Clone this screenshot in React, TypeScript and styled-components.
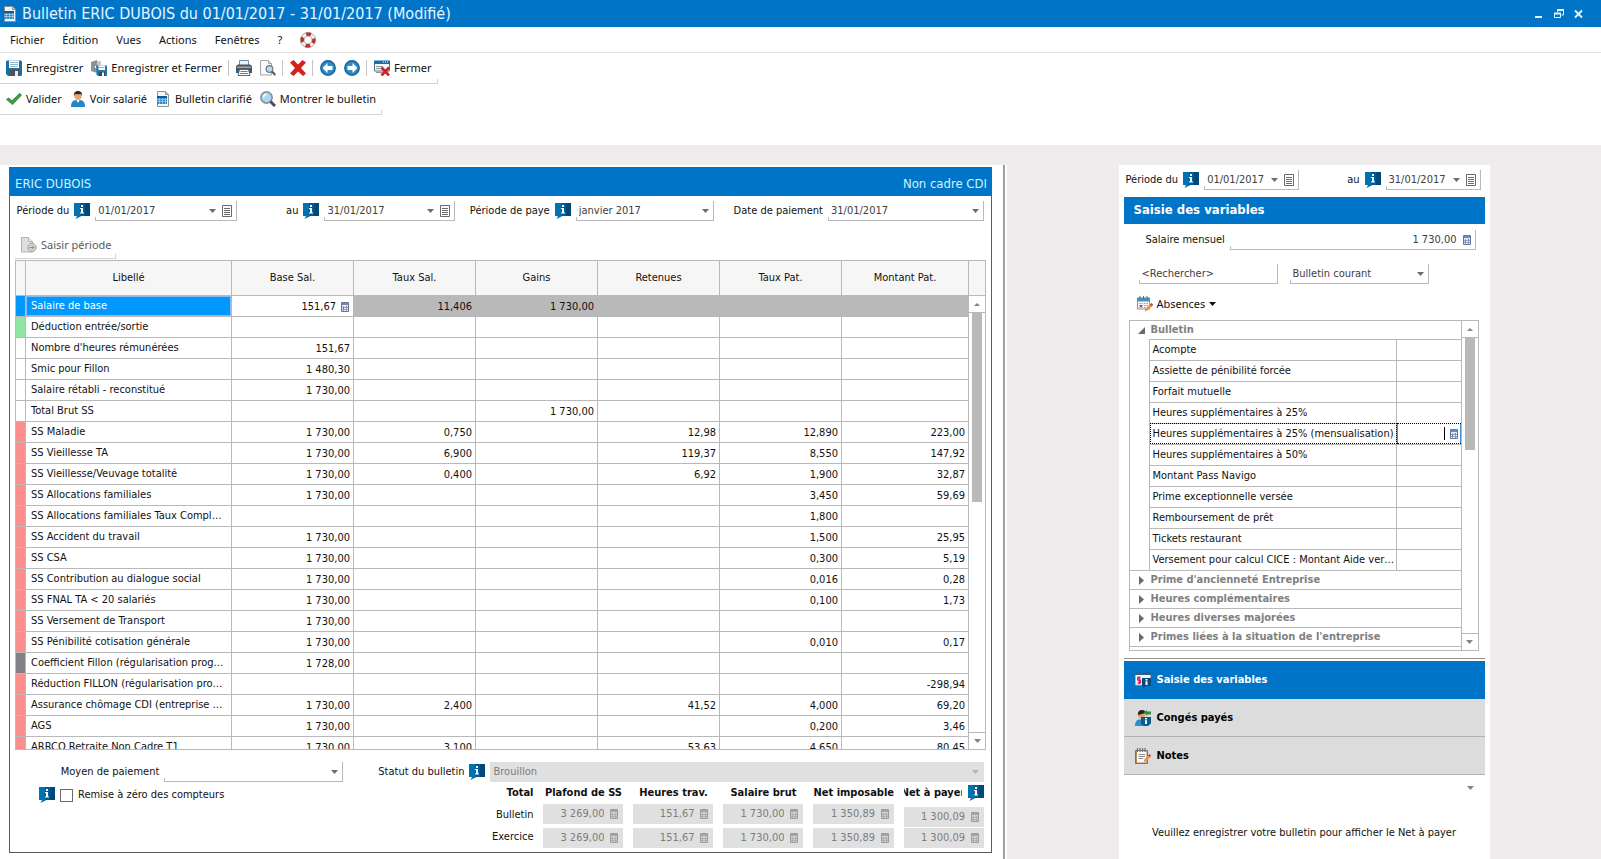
import React from 'react';
import styled, { createGlobalStyle, css } from 'styled-components';

const UI_FONT = '"DejaVu Sans Condensed", "Noto Sans", sans-serif';
const BAR_FONT = '"Noto Sans", "DejaVu Sans Condensed", sans-serif';
const BLUE = '#0075c8';
const LINE = '#b9b9b9';

const GlobalStyle = createGlobalStyle`
  *, *::before, *::after { box-sizing: border-box; }
  body { margin: 0; background: #eeeced; font-family: ${UI_FONT}; font-size: 11px; line-height: 16px; color: #111; }
  button, input, select { font: inherit; color: inherit; margin: 0; border-radius: 0; }
  button { background: none; border: 0; padding: 0; }
  svg { display: block; flex: none; }
`;

/* ---------- window frame ---------- */

const Window = styled.div`
  display: flex;
  flex-direction: column;
  height: 100vh;
  min-height: 720px;
  min-width: 1280px;
`;

const TitleBar = styled.header`
  display: flex;
  align-items: center;
  gap: 4px;
  height: 27px;
  padding: 0 16px 0 2px;
  background: ${BLUE};
  color: #e4f6ff;
`;

const Title = styled.h1`
  flex: 1;
  margin: 0;
  font-size: 16px;
  font-weight: 400;
  line-height: 24px;
`;

const WindowButtons = styled.div`
  display: flex;
  gap: 8px;
`;

const MenuBar = styled.nav`
  display: flex;
  align-items: center;
  gap: 18px;
  height: 26px;
  padding: 0 10px;
  background: #fff;
  border-bottom: 1px solid #e0e0e0;
  font-family: ${BAR_FONT};
`;

const Toolbars = styled.div`
  display: flex;
  flex-direction: column;
  align-items: flex-start;
  height: 92px;
  background: #fff;
`;

const Toolbar = styled.div`
  position: relative;
  display: flex;
  align-items: center;
  gap: 8px;
  height: 31px;
  padding: 0 6px;
  border-bottom: 1px solid #d4d4d4;
  &::after {
    content: '';
    position: absolute;
    right: 0;
    bottom: 0;
    width: 1px;
    height: 4px;
    background: #d4d4d4;
  }
`;

const ToolButton = styled.button<{ $dim?: boolean }>`
  display: flex;
  align-items: center;
  gap: 4px;
  color: ${(p) => (p.$dim ? '#5a5a5a' : '#111')};
  font-family: ${BAR_FONT};
  white-space: nowrap;
`;

const Separator = styled.span`
  width: 1px;
  height: 16px;
  margin: 0 -1px 0 -2px;
  background: #c4c4c4;
`;

const Workspace = styled.main`
  flex: 1;
  min-height: 0;
  display: grid;
  grid-template-columns: minmax(0, 1007fr) minmax(0, 594fr);
  grid-template-rows: minmax(0, 1fr);
  padding-top: 20px;
`;

const PayslipArea = styled.section`
  display: flex;
  padding: 2px 2px 6px 9px;
  background: #fff;
`;

const Splitter = styled.div`
  width: 2px;
  margin: -2px 0 -6px 11px;
  background: #a0a0a0;
`;

const SideArea = styled.aside`
  display: flex;
  justify-content: center;
`;

/* ---------- shared controls ---------- */

const Field = styled.span<{ $width?: number; $disabled?: boolean }>`
  position: relative;
  display: flex;
  align-items: center;
  gap: 6px;
  ${(p) => (p.$width ? css`flex: 0 0 ${p.$width}px;` : css`flex: 1;`)}
  min-width: 0;
  height: 20px;
  padding: 0 4px 0 3px;
  color: #404040;
  border-right: 1px solid ${LINE};
  border-bottom: 1px solid ${LINE};
  &::before {
    content: '';
    position: absolute;
    left: 0;
    bottom: 0;
    width: 1px;
    height: 3px;
    background: ${LINE};
  }
  ${(p) =>
    p.$disabled &&
    css`
      background: #e0e0e0;
      color: #7c7c7c;
      border-color: #e0e0e0;
      &::before { display: none; }
    `}
`;

const TextInput = styled.input<{ $right?: boolean }>`
  flex: 1;
  width: 0;
  min-width: 0;
  height: 18px;
  padding: 0;
  border: 0;
  outline: 0;
  background: transparent;
  text-align: ${(p) => (p.$right ? 'right' : 'left')};
  &::placeholder { color: #404040; opacity: 1; }
`;

const SelectInput = styled.select`
  flex: 1;
  width: 0;
  min-width: 0;
  height: 18px;
  padding: 0;
  border: 0;
  outline: 0;
  opacity: 1;
  appearance: none;
  background: transparent;
`;

const Labelled = styled.div`
  display: flex;
  align-items: center;
  justify-content: flex-end;
  gap: 5px;
  min-width: 0;
  white-space: nowrap;
`;

/* ---------- payslip ---------- */

const Payslip = styled.div`
  flex: 1;
  min-width: 0;
  display: flex;
  flex-direction: column;
  border: 1px solid #5c5c5c;
`;

const PayslipHeader = styled.div`
  display: flex;
  justify-content: space-between;
  align-items: center;
  height: 28px;
  padding: 3px 4px 0 5px;
  background: ${BLUE};
  color: #cdf3ff;
  font-size: 13px;
`;

const PeriodRow = styled.div`
  display: grid;
  grid-template-columns: 227fr 218fr 258fr 270fr;
  align-items: center;
  padding: 5px 7px 0 0;
`;

const SubToolbar = styled.div`
  display: flex;
  align-items: flex-start;
  padding: 15px 0 0 5px;
  margin-bottom: 1px;
`;

const SubToolbarInner = styled(Toolbar)`
  height: 23px;
  padding: 0 4px 5px 6px;
`;

const GridFrame = styled.div`
  flex: 1;
  min-height: 0;
  display: flex;
  margin: 0 5px;
  border: 1px solid ${LINE};
`;

const GridBody = styled.div`
  flex: 1;
  min-width: 0;
  overflow: hidden;
`;

const PayTable = styled.table`
  width: 100%;
  table-layout: fixed;
  border-collapse: separate;
  border-spacing: 0;
`;

const Column = styled.col<{ $width?: number }>`
  width: ${(p) => (p.$width ? `${p.$width}px` : 'auto')};
`;

const HeadCell = styled.th`
  height: 35px;
  padding: 0;
  background: #f6f6f6;
  border-right: 1px solid ${LINE};
  border-bottom: 1px solid ${LINE};
  font-weight: 400;
  text-align: center;
`;

const bodyCell = css`
  height: 21px;
  border-right: 1px solid ${LINE};
  border-bottom: 1px solid ${LINE};
  white-space: nowrap;
  overflow: hidden;
`;

const MarkCell = styled.td<{ $color: string }>`
  ${bodyCell}
  padding: 0;
  background: ${(p) => p.$color};
`;

const LabelCell = styled.th<{ $active?: boolean }>`
  ${bodyCell}
  padding: 0 6px 1px 5px;
  font-weight: 400;
  text-align: left;
  text-overflow: ellipsis;
  ${(p) =>
    p.$active &&
    css`
      background: #0099ff;
      color: #fff;
      box-shadow: inset 0 0 0 1px #8cb8e6;
    `}
`;

const NumCell = styled.td<{ $shade?: boolean }>`
  ${bodyCell}
  padding: 1px 3px 0 0;
  text-align: right;
  ${(p) =>
    p.$shade &&
    css`
      background: ${LINE};
    `}
`;

const EditValue = styled.span`
  display: flex;
  align-items: center;
  gap: 5px;
  padding-right: 1px;
`;

const ScrollColumn = styled.div`
  flex: 0 0 16px;
  display: flex;
  flex-direction: column;
`;

const ScrollHead = styled.div`
  height: 35px;
  background: #f6f6f6;
  border-bottom: 1px solid ${LINE};
`;

const ScrollTrack = styled.div`
  flex: 1;
  display: flex;
  flex-direction: column;
  background: #fff;
`;

const ScrollButton = styled.button<{ $end?: boolean }>`
  display: flex;
  align-items: center;
  justify-content: center;
  height: 17px;
  border: 0 solid ${LINE};
  border-width: ${(p) => (p.$end ? '1px 0 0 0' : '0 0 1px 0')};
`;

const ScrollRoom = styled.div`
  flex: 1;
  padding: 0 3px;
`;

const ScrollThumb = styled.div<{ $share: number }>`
  height: ${(p) => p.$share}%;
  background: ${LINE};
`;

const PayslipFooter = styled.div`
  padding: 12px 7px 4px 0;
`;

const FooterFields = styled.div`
  display: grid;
  grid-template-columns: 333fr 640fr;
`;

const StatusGroup = styled(Labelled)`
  padding-left: 35px;
`;

const FooterTotals = styled.div`
  display: flex;
  justify-content: space-between;
  align-items: flex-start;
  padding-top: 3px;
`;

const ResetOption = styled.div`
  display: flex;
  align-items: center;
  gap: 5px;
  padding: 2px 0 0 29px;
`;

const CheckBox = styled.input`
  appearance: none;
  width: 13px;
  height: 13px;
  border: 1px solid #6a6a6a;
  background: #fff;
`;

const TotalsTable = styled.table`
  border-collapse: collapse;
`;

const TotalHead = styled.th`
  width: 90px;
  height: 19px;
  padding: 0 0 3px 10px;
  font-weight: 700;
  text-align: center;
  white-space: nowrap;
`;

const TotalCorner = styled(TotalHead)`
  width: auto;
  text-align: right;
`;

const NetHead = styled.span`
  display: flex;
  align-items: center;
  gap: 6px;
`;

const NetText = styled.span`
  flex: 1;
  width: 0;
  display: flex;
  justify-content: center;
  overflow: hidden;
`;

const TotalRowHead = styled.th`
  padding: 0 0 3px;
  font-weight: 400;
  text-align: right;
`;

const TotalCell = styled.td<{ $low?: boolean }>`
  padding: ${(p) => (p.$low ? '3px 0 1px 10px' : '0 0 4px 10px')};
  tbody tr:last-child & { padding: 0 0 0 10px; }
`;

/* ---------- side panel ---------- */

const SidePanel = styled.div`
  flex: 0 1 371px;
  min-width: 0;
  padding: 5px 5px 0;
  background: #fff;
`;

const SidePeriods = styled.div`
  display: flex;
  justify-content: space-between;
  padding: 0 4px 0 2px;
`;

const SideTitle = styled.h2`
  margin: 7px 0 0;
  padding: 0 10px;
  height: 27px;
  background: ${BLUE};
  color: #fff;
  font-size: 13px;
  line-height: 26px;
`;

const SideRow = styled.div`
  display: flex;
  align-items: center;
  gap: 5px;
  padding: 6px 9px 0 22px;
`;

const SearchRow = styled.div`
  display: flex;
  gap: 12px;
  padding: 14px 56px 0 15px;
`;

const AbsenceRow = styled.div`
  display: flex;
  padding: 12px 0 8px 13px;
`;

const VariableFrame = styled.div`
  display: flex;
  margin: 0 6px 0 5px;
  border: 1px solid ${LINE};
`;

const VariableList = styled.div`
  flex: 1;
  min-width: 0;
  padding-bottom: 3px;
  border-right: 1px solid ${LINE};
`;

const GroupButton = styled.button<{ $open?: boolean }>`
  display: flex;
  align-items: center;
  gap: 6px;
  width: 100%;
  height: ${(p) => (p.$open ? 18 : 19)}px;
  padding: 0 0 0 8px;
  border-bottom: ${(p) => (p.$open ? 'none' : `1px solid ${LINE}`)};
  color: #808080;
  font-weight: 700;
`;

const VariableTableWrap = styled.div`
  padding-left: 19px;
  border-bottom: 1px solid ${LINE};
`;

const VariableTable = styled.table`
  width: 100%;
  table-layout: fixed;
  border-collapse: separate;
  border-spacing: 0;
  border-left: 1px solid ${LINE};
`;

const VariableName = styled.th<{ $focus?: boolean }>`
  height: 21px;
  padding: 0 0 0 3px;
  border-top: 1px solid ${LINE};
  border-right: 1px solid ${LINE};
  font-weight: 400;
  text-align: left;
  white-space: nowrap;
  overflow: hidden;
  text-overflow: ellipsis;
  ${(p) =>
    p.$focus &&
    css`
      outline: 1px dotted #000;
      outline-offset: -1px;
    `}
`;

const VariableValue = styled.td<{ $focus?: boolean }>`
  padding: 0 3px 0 0;
  border-top: 1px solid ${LINE};
  ${(p) =>
    p.$focus &&
    css`
      border-top: 1px dotted #000;
      border-bottom: 1px dotted #000;
      box-shadow: inset 1px 0 0 #3c8fdc, inset -1px 0 0 #3c8fdc;
    `}
`;

const ValueEditor = styled.span`
  display: flex;
  align-items: center;
  justify-content: flex-end;
  gap: 5px;
`;

const Caret = styled.span`
  width: 1px;
  height: 13px;
  background: #000;
`;

const Tabs = styled.nav`
  margin-top: 7px;
  padding-top: 2px;
  border-top: 1px solid #8f8f8f;
`;

const TabButton = styled.button<{ $active?: boolean }>`
  display: flex;
  align-items: center;
  gap: 6px;
  width: 100%;
  height: 38px;
  padding: 0 11px;
  background: ${(p) => (p.$active ? BLUE : '#dcdcdd')};
  color: ${(p) => (p.$active ? '#fff' : '#000')};
  border-bottom: 1px solid ${(p) => (p.$active ? BLUE : '#b2b2b2')};
  font-weight: 700;
`;

const MoreRow = styled.div`
  display: flex;
  justify-content: flex-end;
  padding: 11px 11px 0;
`;

const Notice = styled.p`
  margin: 35px 10px 0;
  text-align: center;
`;

/* ---------- icons ---------- */

const Arrow = ({ color = '#6c6c6c' }: { color?: string }) => (
  <svg width="7" height="4" viewBox="0 0 7 4" aria-hidden="true">
    <path d="M0 0h7L3.5 4z" fill={color} />
  </svg>
);

const ArrowUp = () => (
  <svg width="6" height="3" viewBox="0 0 6 3" aria-hidden="true">
    <path d="M0 3h6L3 0z" fill="#858585" />
  </svg>
);

const Icon = ({ children }: { children: React.ReactNode }) => (
  <svg width="16" height="16" viewBox="0 0 16 16" aria-hidden="true">
    {children}
  </svg>
);

const InfoIcon = () => (
  <Icon>
    <path d="M0 0h16v13H7.500L1.500 16 3 13H0z" fill="#0072b0" />
    <path d="M6 0h10v13H6z" fill="#005c94" />
    <path d="M11 0h5v13h-5z" fill="#00477a" />
    <path d="M7 2h2v2H7zM6 5h3v4.500h1v1H6v-1h1V6H6z" fill="#fff" />
  </Icon>
);

const ListIcon = () => (
  <svg width="10" height="12" viewBox="0 0 10 12" aria-hidden="true">
    <path d="M.5.5h9v11h-9z" fill="#fff" stroke="#6a6a6a" />
    <path d="M2 3.500h6M2 5.500h6M2 7.500h6M2 9.500h6" stroke="#6a6a6a" />
  </svg>
);

const CalcIcon = ({ muted = false }: { muted?: boolean }) => (
  <svg width="8" height="10" viewBox="0 0 8 10" aria-hidden="true">
    <path d="M.5.5h7v9h-7z" fill={muted ? '#d0d0d0' : '#e2ebf6'} stroke={muted ? '#9c9c9c' : '#64789c'} />
    <path d="M1 1h6v2H1z" fill={muted ? '#a4a4a4' : '#6a8cc0'} />
    <path d="M1 5.500h6M1 7.500h6M2.500 4v5M5.500 4v5" stroke={muted ? '#a8a8a8' : '#8194b8'} strokeWidth=".8" />
    {!muted && <path d="M5 4h1v1H5zM2 6h1v1H2z" fill="#d04a40" />}
  </svg>
);

const SheetIcon = () => (
  <Icon>
    <path d="M2.500.5h8l3 3v12h-11z" fill="#f4f6f8" stroke="#8a929a" />
    <path d="M10.500.5v3h3" fill="#c9ced4" stroke="#8a929a" />
    <path d="M2 5h10v8H2z" fill="#2f86c2" />
    <path d="M2 5h10v2H2z" fill="#145a92" />
    <path d="M2 8.500h10M2 10.500h10M4.500 7v6M7.500 7v6M10.500 7v6" stroke="#a9d4f0" strokeWidth=".7" />
  </Icon>
);

const SaveIcon = () => (
  <Icon>
    <path d="M0 1.500 1 .5h14l1 1V15l-1 1H2l-2-2z" fill="#1a6ea6" />
    <path d="M3 .5h10V8H3z" fill="#fff" />
    <path d="M4 2.500h8M4 4.500h8M4 6.500h8" stroke="#9ab4c4" />
    <path d="M4 10h9v6H4z" fill="#4b5258" />
    <path d="M9 11h3v5H9z" fill="#e6edf2" />
  </Icon>
);

const SaveCloseIcon = () => (
  <Icon>
    <path d="M0 2 6 0v13l-6-2z" fill="#8b9299" />
    <path d="M6 1h4v11H6z" fill="#c4c9cd" />
    <path d="M4 6h1v2H4z" fill="#fff" />
    <path d="M5.500 5.500h10.500V16H7l-1.500-1.500z" fill="#1a78b4" />
    <path d="M7.500 5.500h6.500v4.500H7.500z" fill="#fff" />
    <path d="M8 7.500h5.500" stroke="#9ab4c4" />
    <path d="M8 12h6v4H8z" fill="#3e464c" />
    <path d="M11 12.500h2V16h-2z" fill="#fff" />
  </Icon>
);

const PrinterIcon = () => (
  <Icon>
    <path d="M3.500.5h9v5h-9z" fill="#e9f3fa" stroke="#6d8ea6" />
    <path d="M0 6 2 4.500h12L16 6v7H0z" fill="#4e5357" />
    <path d="M1 6.500h14V8H1z" fill="#a3a9ae" />
    <path d="M3.500 9.500h9l1.500 6H2z" fill="#fff" stroke="#1f7db8" />
    <path d="M4.500 11.500h7M4 13.500h8" stroke="#2f8cc6" />
  </Icon>
);

const PreviewIcon = () => (
  <Icon>
    <path d="M.5.5h8l3 3v11.500H.5z" fill="#fafafa" stroke="#a3a8ac" />
    <path d="M8.500.5v3h3" fill="#dfe2e4" stroke="#a3a8ac" />
    <circle cx="9.500" cy="9" r="3.300" fill="#b7dcf2" stroke="#6d7880" strokeWidth="1.200" />
    <path d="m12 11.500 3.300 3.500" stroke="#4d565d" strokeWidth="2" />
  </Icon>
);

const DeleteIcon = () => (
  <Icon>
    <path d="M0 2.500 3.500 0 8 4.500 12.500 0 16 2.500 11 8l5 5.500-3 2.500L8 11.500 3.500 16 0 13.500 5 8z" fill="#d4211d" />
  </Icon>
);

const RoundArrow = ({ right = false }: { right?: boolean }) => (
  <Icon>
    <circle cx="8" cy="8" r="7.200" fill="#2b8cc6" stroke="#175f94" strokeWidth="1.400" />
    <path
      d={right ? 'M13.500 8 8.500 3v3H3.500v4h5v3z' : 'M2.500 8l5-5v3h5v4h-5v3z'}
      fill="#fff"
    />
  </Icon>
);

const CloseWindowIcon = () => (
  <Icon>
    <path d="M.5 1.500h15v9.500H.5z" fill="#f3f5f7" stroke="#5e7486" />
    <path d="M0 .5h16V4H0z" fill="#1a6ea6" />
    <path d="M9 2h1M11 2h1M13 2h1" stroke="#fff" />
    <path d="M2 6.500h7M2 8.500h5M2 12.500h6" stroke="#8d969d" />
    <path d="m7.500 7.500 7.500 8M15 7.500l-7.500 8" stroke="#cc1f24" strokeWidth="2.600" />
  </Icon>
);

const CheckIcon = () => (
  <Icon>
    <path d="M0 8.500 2.500 6.500l3.500 3L13.500 2 16 4 6.500 14z" fill="#2f8a3c" />
    <path d="m1.500 8.500 4.700 3.800L14 3.500" fill="none" stroke="#58b060" />
  </Icon>
);

const PersonIcon = () => (
  <Icon>
    <path d="M1 16c0-5 2-6.500 5-7h4c3 .5 5 2 5 7z" fill="#2486c6" />
    <path d="M6.300 9 8 12l1.700-3z" fill="#fff" />
    <circle cx="8" cy="5.300" r="3.600" fill="#e8a774" />
    <path d="M4 5c-.6-3.500 1.500-5 4-5s4.600 1.500 4 5l-1-2C9 3.400 7 3.400 5 3z" fill="#33291f" />
  </Icon>
);

const GlassIcon = () => (
  <Icon>
    <circle cx="6.500" cy="6.500" r="5.600" fill="#aed8f2" stroke="#8a959c" strokeWidth="1.800" />
    <path d="M3.500 6.500a3 3 0 0 1 3-3" fill="none" stroke="#fff" strokeWidth="1.300" />
    <path d="m10.500 10.500 4.500 4.500" stroke="#464c52" strokeWidth="3" />
  </Icon>
);

const LifebuoyIcon = () => (
  <Icon>
    <circle cx="8" cy="8" r="5.800" fill="none" stroke="#f4f4f4" strokeWidth="3.600" />
    <circle cx="8" cy="8" r="5.800" fill="none" stroke="#b8322b" strokeWidth="3.600" strokeDasharray="4.555 4.555" strokeDashoffset="-2.278" transform="rotate(45 8 8)" />
    <circle cx="8" cy="8" r="7.600" fill="none" stroke="#9a8480" strokeWidth=".7" />
    <circle cx="8" cy="8" r="4" fill="#fff" stroke="#a89490" strokeWidth=".7" />
  </Icon>
);

const PagePendingIcon = () => (
  <Icon>
    <path d="M.5.5h7l4 4v10.500H.5z" fill="#dedede" stroke="#b4b4b4" />
    <path d="M7.500.5v4h4" fill="#f2f2f2" stroke="#b4b4b4" />
    <circle cx="11" cy="10.500" r="4.200" fill="#d4d4d4" stroke="#a4a4a4" />
    <path d="M8.500 10.500h4.500M11 8.500l2 2-2 2" fill="none" stroke="#8e8e8e" />
  </Icon>
);

const CalendarIcon = () => (
  <Icon>
    <path d="M.5 3.500h12v9.500H.5z" fill="#f6f9fb" stroke="#8b98a2" />
    <path d="M0 1.500h13v4H0z" fill="#4c8fb8" />
    <path d="M3 0v3M6.500 0v3M10 0v3" stroke="#5a6a75" />
    <path d="M2 7.500h9M2 9.500h9M2 11.500h7" stroke="#90a4b2" strokeDasharray="1.500 1" />
    <path d="M3 9h2v2H3z" fill="#d0392f" />
    <path d="m7.500 15.500 1-3 5.500-5 2 2-5.500 5z" fill="#e7954a" />
    <path d="m13 8.500 1.500-1.500L16 8.500 14.800 10z" fill="#c43f3a" />
  </Icon>
);

const VariablesIcon = () => (
  <Icon>
    <path d="M.5 1.500h15v11.500H.5z" fill="#f5f6f8" stroke="#a6b6c2" />
    <path d="M0 .5h16V3H0z" fill="#24618e" />
    <path d="M5.500 5.500H2.800v2.700h2.700v2.700H2.500M4.200 4.500v7.500" fill="none" stroke="#d81b72" strokeWidth="1.300" />
    <path d="M7 6h9v8h-5l-3 2v-2H7z" fill="#0d4a7c" />
    <path d="M10.500 7h2v1.500h-2zM10.500 9.300h2V13h-2z" fill="#fff" />
  </Icon>
);

const LeaveIcon = () => (
  <Icon>
    <path d="M0 16c0-4.500 2-6 4-6.500h5V16z" fill="#2f8cc8" />
    <circle cx="6.500" cy="5" r="3.500" fill="#e0a070" />
    <path d="M3 5c-.5-3.500 1.500-5 4-5s3.500 1.500 3.500 3z" fill="#2e241c" />
    <path d="m9 2.500 3-2.500v1.500h4v3h-4V6z" fill="#2f9140" />
    <path d="M6 7h10v6.500l-3 2.500H9l-3-2z" fill="#0c5c94" />
    <path d="M10 8h2v1.500h-2zM10 10.300h2V14h-2z" fill="#fff" />
  </Icon>
);

const NotesIcon = () => (
  <Icon>
    <path d="M.5 2.500h12v13H.5z" fill="#b8845a" stroke="#7b7068" />
    <path d="M2 3h9.500v11.500H2z" fill="#fbfbf8" />
    <path d="M2.500 0v4M5 0v4M7.500 0v4M10 0v4" stroke="#70767a" strokeWidth="1.300" />
    <path d="M3.500 6.500h6.500M3.500 8.500h6.500M3.500 10.500h4.500" stroke="#8b9094" />
    <path d="m8.500 14.500.8-3L14 6.500 16 8l-4.500 5.300z" fill="#e8954a" />
    <path d="m13.300 7.200 1-1.200L16 7.500 15 9z" fill="#c43f3a" />
  </Icon>
);

/* ---------- composed controls ---------- */

const DateField = ({ id, value, width, list = true }: { id: string; value: string; width: number; list?: boolean }) => (
  <Field $width={width}>
    <TextInput id={id} defaultValue={value} />
    <button aria-label="Ouvrir le calendrier"><Arrow /></button>
    {list && <button aria-label="Choisir une date"><ListIcon /></button>}
  </Field>
);

const AmountField = ({ name, value }: { name: string; value: string }) => (
  <Field $disabled>
    <TextInput aria-label={name} defaultValue={value} $right disabled />
    <CalcIcon muted />
  </Field>
);

/* ---------- data ---------- */

const BLUE_MARK = '#0099ff';
const GREEN = '#8fe6a0';
const RED = '#fa8f8d';
const GREY = '#808085';
const NONE = '#ffffff';

type Row = [mark: string, label: string, ...values: string[]];

const COLUMN_WIDTHS = [10, 206, 122, 122, 122, 122, 122, undefined];

const ROWS: Row[] = [
  [GREEN, 'Déduction entrée/sortie', '', '', '', '', '', ''],
  [NONE, "Nombre d'heures rémunérées", '151,67', '', '', '', '', ''],
  [NONE, 'Smic pour Fillon', '1 480,30', '', '', '', '', ''],
  [NONE, 'Salaire rétabli - reconstitué', '1 730,00', '', '', '', '', ''],
  [NONE, 'Total Brut SS', '', '', '1 730,00', '', '', ''],
  [RED, 'SS Maladie', '1 730,00', '0,750', '', '12,98', '12,890', '223,00'],
  [RED, 'SS Vieillesse TA', '1 730,00', '6,900', '', '119,37', '8,550', '147,92'],
  [RED, 'SS Vieillesse/Veuvage totalité', '1 730,00', '0,400', '', '6,92', '1,900', '32,87'],
  [RED, 'SS Allocations familiales', '1 730,00', '', '', '', '3,450', '59,69'],
  [RED, 'SS Allocations familiales Taux Complémentaire', '', '', '', '', '1,800', ''],
  [RED, 'SS Accident du travail', '1 730,00', '', '', '', '1,500', '25,95'],
  [RED, 'SS CSA', '1 730,00', '', '', '', '0,300', '5,19'],
  [RED, 'SS Contribution au dialogue social', '1 730,00', '', '', '', '0,016', '0,28'],
  [RED, 'SS FNAL TA < 20 salariés', '1 730,00', '', '', '', '0,100', '1,73'],
  [RED, 'SS Versement de Transport', '1 730,00', '', '', '', '', ''],
  [RED, 'SS Pénibilité cotisation générale', '1 730,00', '', '', '', '0,010', '0,17'],
  [GREY, 'Coefficient Fillon (régularisation progressive)', '1 728,00', '', '', '', '', ''],
  [RED, 'Réduction FILLON (régularisation progressive)', '', '', '', '', '', '-298,94'],
  [RED, 'Assurance chômage CDI (entreprise de droit commun)', '1 730,00', '2,400', '', '41,52', '4,000', '69,20'],
  [RED, 'AGS', '1 730,00', '', '', '', '0,200', '3,46'],
  [RED, 'ARRCO Retraite Non Cadre T1', '1 730,00', '3,100', '', '53,63', '4,650', '80,45'],
];

const VARIABLES = [
  'Acompte',
  'Assiette de pénibilité forcée',
  'Forfait mutuelle',
  'Heures supplémentaires à 25%',
  'Heures supplémentaires à 25% (mensualisation)',
  'Heures supplémentaires à 50%',
  'Montant Pass Navigo',
  'Prime exceptionnelle versée',
  'Remboursement de prêt',
  'Tickets restaurant',
  'Versement pour calcul CICE : Montant Aide versée',
];

const GROUPS = [
  "Prime d'ancienneté Entreprise",
  'Heures complémentaires',
  'Heures diverses majorées',
  "Primes liées à la situation de l'entreprise",
];

const FOCUSED = 4;

const TOTALS = [
  { name: 'Bulletin', values: ['3 269,00', '151,67', '1 730,00', '1 350,89', '1 300,09'] },
  { name: 'Exercice', values: ['3 269,00', '151,67', '1 730,00', '1 350,89', '1 300,09'] },
];

const TOTAL_HEADS = ['Plafond de SS', 'Heures trav.', 'Salaire brut', 'Net imposable'];

/* ---------- sections ---------- */

const WindowHeader = () => (
  <>
    <TitleBar>
      <SheetIcon />
      <Title>Bulletin ERIC DUBOIS du 01/01/2017 - 31/01/2017 (Modifié)</Title>
      <WindowButtons>
        <button aria-label="Réduire">
          <svg width="12" height="12" viewBox="0 0 12 12"><path d="M2 8h7v2H2z" fill="#e4f6ff" /></svg>
        </button>
        <button aria-label="Restaurer">
          <svg width="12" height="12" viewBox="0 0 12 12">
            <path d="M4.500 4V2h6v5H8.500" fill="none" stroke="#e4f6ff" />
            <path d="M4 2h7" stroke="#e4f6ff" strokeWidth="2" />
            <path d="M1.500 5.500h6v4h-6z" fill="none" stroke="#e4f6ff" />
            <path d="M1 5.500h7" stroke="#e4f6ff" strokeWidth="2" />
          </svg>
        </button>
        <button aria-label="Fermer">
          <svg width="12" height="12" viewBox="0 0 12 12"><path d="m2 2.500 7 7M9 2.500l-7 7" stroke="#e4f6ff" strokeWidth="1.800" /></svg>
        </button>
      </WindowButtons>
    </TitleBar>
    <MenuBar>
      {['Fichier', 'Édition', 'Vues', 'Actions', 'Fenêtres', '?'].map((m) => (
        <button key={m}>{m}</button>
      ))}
      <button aria-label="Assistance"><LifebuoyIcon /></button>
    </MenuBar>
    <Toolbars>
      <Toolbar>
        <ToolButton><SaveIcon />Enregistrer</ToolButton>
        <ToolButton><SaveCloseIcon />Enregistrer et Fermer</ToolButton>
        <Separator />
        <ToolButton aria-label="Imprimer"><PrinterIcon /></ToolButton>
        <ToolButton aria-label="Aperçu"><PreviewIcon /></ToolButton>
        <Separator />
        <ToolButton aria-label="Supprimer"><DeleteIcon /></ToolButton>
        <Separator />
        <ToolButton aria-label="Précédent"><RoundArrow /></ToolButton>
        <ToolButton aria-label="Suivant"><RoundArrow right /></ToolButton>
        <Separator />
        <ToolButton><CloseWindowIcon />Fermer</ToolButton>
      </Toolbar>
      <Toolbar>
        <ToolButton><CheckIcon />Valider</ToolButton>
        <ToolButton><PersonIcon />Voir salarié</ToolButton>
        <ToolButton><SheetIcon />Bulletin clarifié</ToolButton>
        <ToolButton><GlassIcon />Montrer le bulletin</ToolButton>
      </Toolbar>
    </Toolbars>
  </>
);

const PayGrid = () => (
  <GridFrame>
    <GridBody>
      <PayTable>
        <colgroup>
          {COLUMN_WIDTHS.map((w, i) => <Column key={i} $width={w} />)}
        </colgroup>
        <thead>
          <tr>
            <HeadCell />
            {['Libellé', 'Base Sal.', 'Taux Sal.', 'Gains', 'Retenues', 'Taux Pat.', 'Montant Pat.'].map((h) => (
              <HeadCell key={h} scope="col">{h}</HeadCell>
            ))}
          </tr>
        </thead>
        <tbody>
          <tr>
            <MarkCell $color={BLUE_MARK} />
            <LabelCell scope="row" $active>Salaire de base</LabelCell>
            <NumCell>
              <EditValue>
                <TextInput aria-label="Base salariale" defaultValue="151,67" $right />
                <CalcIcon />
              </EditValue>
            </NumCell>
            {['11,406', '1 730,00', '', '', ''].map((v, i) => (
              <NumCell key={i} $shade>{v}</NumCell>
            ))}
          </tr>
          {ROWS.map(([mark, label, ...values]) => (
            <tr key={label}>
              <MarkCell $color={mark} />
              <LabelCell scope="row">{label}</LabelCell>
              {values.map((v, i) => (
                <NumCell key={i}>{v}</NumCell>
              ))}
            </tr>
          ))}
        </tbody>
      </PayTable>
    </GridBody>
    <ScrollColumn>
      <ScrollHead />
      <ScrollTrack>
        <ScrollButton aria-label="Défiler vers le haut"><ArrowUp /></ScrollButton>
        <ScrollRoom><ScrollThumb $share={45} /></ScrollRoom>
        <ScrollButton $end aria-label="Défiler vers le bas"><Arrow color="#858585" /></ScrollButton>
      </ScrollTrack>
    </ScrollColumn>
  </GridFrame>
);

const PayslipPanel = () => (
  <Payslip>
    <PayslipHeader><span>ERIC DUBOIS</span><span>Non cadre CDI</span></PayslipHeader>
    <PeriodRow>
      <Labelled>
        <label htmlFor="from">Période du</label><InfoIcon />
        <DateField id="from" value="01/01/2017" width={142} />
      </Labelled>
      <Labelled>
        <label htmlFor="to">au</label><InfoIcon />
        <DateField id="to" value="31/01/2017" width={131} />
      </Labelled>
      <Labelled>
        <label htmlFor="month">Période de paye</label><InfoIcon />
        <Field $width={138}>
          <SelectInput id="month"><option>janvier 2017</option></SelectInput>
          <Arrow />
        </Field>
      </Labelled>
      <Labelled>
        <label htmlFor="paid">Date de paiement</label>
        <DateField id="paid" value="31/01/2017" width={156} list={false} />
      </Labelled>
    </PeriodRow>
    <SubToolbar>
      <SubToolbarInner><ToolButton $dim><PagePendingIcon />Saisir période</ToolButton></SubToolbarInner>
    </SubToolbar>
    <PayGrid />
    <PayslipFooter>
      <FooterFields>
        <Labelled>
          <label htmlFor="means">Moyen de paiement</label>
          <Field $width={179}>
            <SelectInput id="means"><option></option></SelectInput>
            <Arrow />
          </Field>
        </Labelled>
        <StatusGroup>
          <label htmlFor="status">Statut du bulletin</label><InfoIcon />
          <Field $disabled>
            <SelectInput id="status" disabled><option>Brouillon</option></SelectInput>
            <Arrow color="#b4b4b4" />
          </Field>
        </StatusGroup>
      </FooterFields>
      <FooterTotals>
        <ResetOption>
          <InfoIcon />
          <CheckBox type="checkbox" id="reset" />
          <label htmlFor="reset">Remise à zéro des compteurs</label>
        </ResetOption>
        <TotalsTable>
          <thead>
            <tr>
              <TotalCorner scope="col">Total</TotalCorner>
              {TOTAL_HEADS.map((h) => <TotalHead key={h} scope="col">{h}</TotalHead>)}
              <TotalHead scope="col">
                <NetHead><NetText>Net à payer</NetText><InfoIcon /></NetHead>
              </TotalHead>
            </tr>
          </thead>
          <tbody>
            {TOTALS.map((t) => (
              <tr key={t.name}>
                <TotalRowHead scope="row">{t.name}</TotalRowHead>
                {t.values.map((v, i) => (
                  <TotalCell key={i} $low={i === 4}>
                    <AmountField name={`${t.name} ${i + 1}`} value={v} />
                  </TotalCell>
                ))}
              </tr>
            ))}
          </tbody>
        </TotalsTable>
      </FooterTotals>
    </PayslipFooter>
  </Payslip>
);

const VariablesPanel = () => (
  <SidePanel>
    <SidePeriods>
      <Labelled>
        <label htmlFor="side-from">Période du</label><InfoIcon />
        <DateField id="side-from" value="01/01/2017" width={95} />
      </Labelled>
      <Labelled>
        <label htmlFor="side-to">au</label><InfoIcon />
        <DateField id="side-to" value="31/01/2017" width={95} />
      </Labelled>
    </SidePeriods>
    <SideTitle>Saisie des variables</SideTitle>
    <SideRow>
      <label htmlFor="salary">Salaire mensuel</label>
      <Field>
        <TextInput id="salary" defaultValue="1 730,00" $right />
        <CalcIcon />
      </Field>
    </SideRow>
    <SearchRow>
      <Field><TextInput aria-label="Rechercher" placeholder="<Rechercher>" /></Field>
      <Field>
        <SelectInput aria-label="Bulletin affiché"><option>Bulletin courant</option></SelectInput>
        <Arrow />
      </Field>
    </SearchRow>
    <AbsenceRow>
      <ToolButton><CalendarIcon />Absences<Arrow color="#111" /></ToolButton>
    </AbsenceRow>
    <VariableFrame>
      <VariableList>
        <GroupButton $open>
          <svg width="7" height="7" viewBox="0 0 7 7" aria-hidden="true"><path d="M7 0v7H0z" fill="#6a6a6a" /></svg>
          Bulletin
        </GroupButton>
        <VariableTableWrap>
          <VariableTable>
            <colgroup><Column $width={247} /><Column /></colgroup>
            <tbody>
              {VARIABLES.map((v, i) => (
                <tr key={v}>
                  <VariableName scope="row" $focus={i === FOCUSED}>{v}</VariableName>
                  <VariableValue $focus={i === FOCUSED}>
                    {i === FOCUSED && <ValueEditor><Caret /><CalcIcon /></ValueEditor>}
                  </VariableValue>
                </tr>
              ))}
            </tbody>
          </VariableTable>
        </VariableTableWrap>
        {GROUPS.map((g) => (
          <GroupButton key={g}>
            <svg width="7" height="9" viewBox="0 0 7 9" aria-hidden="true"><path d="M1 0v9l5-4.500z" fill="#6a6a6a" /></svg>
            {g}
          </GroupButton>
        ))}
      </VariableList>
      <ScrollColumn>
        <ScrollTrack>
          <ScrollButton aria-label="Défiler vers le haut"><ArrowUp /></ScrollButton>
          <ScrollRoom><ScrollThumb $share={38} /></ScrollRoom>
          <ScrollButton $end aria-label="Défiler vers le bas"><Arrow color="#858585" /></ScrollButton>
        </ScrollTrack>
      </ScrollColumn>
    </VariableFrame>
    <Tabs>
      <TabButton $active><VariablesIcon />Saisie des variables</TabButton>
      <TabButton><LeaveIcon />Congés payés</TabButton>
      <TabButton><NotesIcon />Notes</TabButton>
    </Tabs>
    <MoreRow><button aria-label="Autres volets"><Arrow color="#858585" /></button></MoreRow>
    <Notice>Veuillez enregistrer votre bulletin pour afficher le Net à payer</Notice>
  </SidePanel>
);

const App = () => (
  <>
    <GlobalStyle />
    <Window>
      <WindowHeader />
      <Workspace>
        <PayslipArea><PayslipPanel /><Splitter /></PayslipArea>
        <SideArea><VariablesPanel /></SideArea>
      </Workspace>
    </Window>
  </>
);

export default App;
